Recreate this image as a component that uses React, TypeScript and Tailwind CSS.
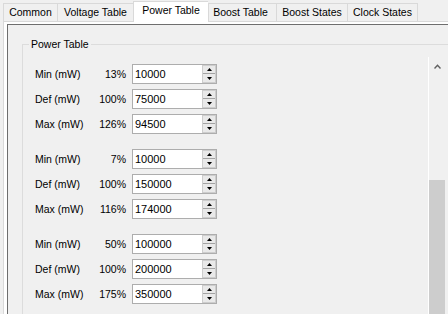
import React from "react";

const groups: [string, string, string][][] = [
  [
    ["Min (mW)", "13%", "10000"],
    ["Def (mW)", "100%", "75000"],
    ["Max (mW)", "126%", "94500"],
  ],
  [
    ["Min (mW)", "7%", "10000"],
    ["Def (mW)", "100%", "150000"],
    ["Max (mW)", "116%", "174000"],
  ],
  [
    ["Min (mW)", "50%", "100000"],
    ["Def (mW)", "100%", "200000"],
    ["Max (mW)", "175%", "350000"],
  ],
];

function Spinner() {
  return (
    <div className="w-[14px] flex flex-col border border-[#cdcdcd] bg-[#e9e9e9]">
      <div className="h-[7px] flex items-center justify-center">
        <svg width="5" height="3" viewBox="0 0 5 3">
          <polygon points="2.5,0 5,3 0,3" fill="#000" />
        </svg>
      </div>
      <div className="h-px bg-[#a3a3a3]" />
      <div className="h-[8px] flex items-center justify-center">
        <svg width="5" height="3" viewBox="0 0 5 3">
          <polygon points="0,0 5,0 2.5,3" fill="#000" />
        </svg>
      </div>
    </div>
  );
}

function Row({ label, pct, value }: { label: string; pct: string; value: string }) {
  return (
    <div className="flex items-center h-[20px]">
      <span className="w-[55px] text-[10.5px] leading-[13px] text-black whitespace-nowrap">{label}</span>
      <span className="w-[36px] text-right text-[10.5px] leading-[13px] text-black">{pct}</span>
      <div className="ml-[6px] w-[85px] h-[20px] border border-[#adadad] bg-white flex">
        <div className="flex-1 pl-[2px] flex items-center text-[11px] leading-[13px] text-black">{value}</div>
        <Spinner />
      </div>
    </div>
  );
}

const tabs = [
  { name: "Common", w: "w-[54px]", extra: "" },
  { name: "Voltage Table", w: "w-[76px]", extra: "" },
  { name: "Power Table", w: "w-[75px]", extra: "" },
  { name: "Boost Table", w: "w-[68px]", extra: "pr-[4px]" },
  { name: "Boost States", w: "w-[71px]", extra: "" },
  { name: "Clock States", w: "w-[71px]", extra: "" },
];

export default function App() {
  return (
    <div
      className="w-[448px] h-[314px] overflow-hidden bg-[#f0f0f0] flex flex-col"
      style={{ fontFamily: "'Liberation Sans', Arial, sans-serif" }}
    >
      {/* Tab strip */}
      <div className="h-[22px] flex items-end pl-[3px] shrink-0">
        {tabs.map((t, i) => {
          const selected = t.name === "Power Table";
          const last = i === tabs.length - 1;
          if (selected) {
            return (
              <div
                key={t.name}
                className={`${t.w} h-[21px] bg-white border-t border-l border-[#d9d9d9] flex items-center justify-center pb-[2px] text-[10.5px] text-black whitespace-nowrap`}
              >
                {t.name}
              </div>
            );
          }
          return (
            <div
              key={t.name}
              className={`${t.w} h-[19px] bg-[#f0f0f0] border-t border-l border-b border-[#d9d9d9] ${last ? "border-r" : ""} ${t.extra} flex items-center justify-center text-[10.5px] text-black whitespace-nowrap`}
            >
              {t.name}
            </div>
          );
        })}
        <div className="flex-1 h-px bg-[#d9d9d9]" />
      </div>

      {/* Tab page */}
      <div className="flex-1 ml-[3px] border-l border-[#d9d9d9] bg-white pl-[3px] pt-[2px] flex flex-col">
        <div className="flex-1 border-l border-t border-[#6e6e6e] bg-[#f0f0f0] flex flex-col">
          <div className="relative mt-[19px] ml-[14px] border-t border-l border-[#dcdcdc] flex flex-1">
            <span className="absolute left-[6px] top-[-7px] px-[2px] bg-[#f0f0f0] text-[10.5px] leading-[13px] text-black whitespace-nowrap">
              Power Table
            </span>
            <div className="w-[405px] shrink-0 pt-[19px] pl-[12px] flex flex-col gap-[15px]">
              {groups.map((g, gi) => (
                <div key={gi} className="flex flex-col gap-[5px]">
                  {g.map(([l, p, v], ri) => (
                    <Row key={ri} label={l} pct={p} value={v} />
                  ))}
                </div>
              ))}
            </div>
            {/* Scrollbar */}
            <div className="w-[17px] shrink-0 mt-[12px] h-[320px] border-l border-white bg-[#f0f0f0] flex flex-col">
              <div className="h-[20px] flex items-center justify-center">
                <svg width="7" height="5" viewBox="0 0 7 5">
                  <polyline points="0.5,4.5 3.5,1.2 6.5,4.5" fill="none" stroke="#606060" strokeWidth="1.4" />
                </svg>
              </div>
              <div className="h-[105px]" />
              <div className="h-[200px] bg-[#cdcdcd]" />
            </div>
          </div>
        </div>
      </div>
    </div>
  );
}
